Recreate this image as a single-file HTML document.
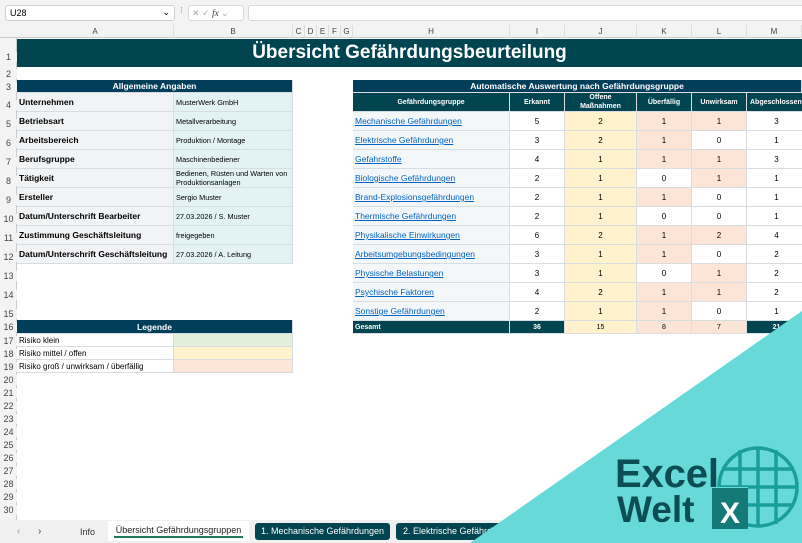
<!DOCTYPE html>
<html><head><meta charset="utf-8"><style>
*{margin:0;padding:0;box-sizing:border-box}
body{width:802px;height:543px;overflow:hidden;background:#fff;font-family:"Liberation Sans",sans-serif;position:relative}
.a{position:absolute}
.rh{position:absolute;left:0;width:17px;font-size:9px;color:#444;text-align:center;background:#f3f3f3}
.cell{position:absolute;font-size:8px;display:flex;align-items:center;border-right:1px solid #d8dde2;border-bottom:1px solid #d8dde2;overflow:hidden}
.lbl{font-weight:bold;font-size:8.5px;background:#f2f3f5;padding-left:2px}
.val{background:#e3f2f3;padding-left:2px;font-size:7.3px;line-height:9px}
.hdr{background:#003e5a;color:#fff;font-weight:bold;justify-content:center}
.th{background:#00454f;color:#fff;font-weight:bold;justify-content:center;font-size:7px;text-align:center;line-height:9px}
.lk{color:#0563c1;text-decoration:underline;background:#f3f7fa;padding-left:2px;font-size:8.5px}
.n{justify-content:center;font-size:8px;background:#fff}
.y{background:#fff2cc}.r{background:#fce4d6}
.ch{position:absolute;top:25px;height:13px;font-size:8px;color:#444;text-align:center;line-height:13px;border-right:1px solid #ddd}
</style></head><body>
<div class="a" style="left:0;top:0;width:802px;height:25px;background:#f3f3f3"></div>
<div class="a" style="left:5px;top:5px;width:170px;height:16px;background:#fff;border:1px solid #d0d0d0;border-radius:3px;font-size:9px;padding:2px 4px">U28<span style="position:absolute;right:4px;top:1px;font-size:9px">⌄</span></div>
<div class="a" style="left:180px;top:5px;font-size:9px;color:#888">⁝</div>
<div class="a" style="left:188px;top:5px;width:56px;height:16px;background:#fff;border:1px solid #d8d8d8;border-radius:3px;font-size:9px;color:#aaa;padding:2px 3px">✕ ✓ <i style="color:#333;font-family:'Liberation Serif',serif">fx</i> ⌄</div>
<div class="a" style="left:248px;top:5px;width:560px;height:16px;background:#fff;border:1px solid #d8d8d8;border-radius:3px"></div>
<div class="a" style="left:0;top:25px;width:802px;height:13px;background:#f3f3f3;border-bottom:1px solid #ccc"></div>
<div class="ch" style="left:17px;width:157px">A</div><div class="ch" style="left:174px;width:119px">B</div>
<div class="ch" style="left:293px;width:12px">C</div><div class="ch" style="left:305px;width:12px">D</div><div class="ch" style="left:317px;width:12px">E</div><div class="ch" style="left:329px;width:12px">F</div><div class="ch" style="left:341px;width:12px">G</div>
<div class="ch" style="left:353px;width:157px">H</div><div class="ch" style="left:510px;width:55px">I</div><div class="ch" style="left:565px;width:72px">J</div><div class="ch" style="left:637px;width:55px">K</div><div class="ch" style="left:692px;width:55px">L</div><div class="ch" style="left:747px;width:55px">M</div>
<div class="a" style="left:0;top:38px;width:17px;height:482px;background:#f3f3f3;border-right:1px solid #ccc"></div>
<div class="rh" style="top:52px">1</div><div class="rh" style="top:69px">2</div><div class="rh" style="top:82px">3</div>
<div class="rh" style="top:100px">4</div><div class="rh" style="top:119px">5</div><div class="rh" style="top:138px">6</div><div class="rh" style="top:157px">7</div><div class="rh" style="top:176px">8</div><div class="rh" style="top:195px">9</div><div class="rh" style="top:214px">10</div><div class="rh" style="top:233px">11</div><div class="rh" style="top:252px">12</div><div class="rh" style="top:271px">13</div><div class="rh" style="top:290px">14</div><div class="rh" style="top:309px">15</div><div class="rh" style="top:322px">16</div>
<div class="rh" style="top:336px">17</div><div class="rh" style="top:349px">18</div><div class="rh" style="top:362px">19</div><div class="rh" style="top:375px">20</div><div class="rh" style="top:388px">21</div><div class="rh" style="top:401px">22</div><div class="rh" style="top:414px">23</div><div class="rh" style="top:427px">24</div><div class="rh" style="top:440px">25</div><div class="rh" style="top:453px">26</div><div class="rh" style="top:466px">27</div><div class="rh" style="top:479px">28</div><div class="rh" style="top:492px">29</div><div class="rh" style="top:505px">30</div>
<div class="a" style="left:17px;top:39px;width:785px;height:28px;background:#00454f;color:#fff;font-weight:bold;font-size:19px;text-align:center;line-height:28px">Übersicht Gefährdungsbeurteilung</div>
<div class="cell hdr" style="left:17px;top:80px;width:276px;height:13px;font-size:8.5px">Allgemeine Angaben</div>
<div class="cell lbl" style="left:17px;top:93px;width:157px;height:19px">Unternehmen</div><div class="cell val" style="left:174px;top:93px;width:119px;height:19px">MusterWerk GmbH</div>
<div class="cell lbl" style="left:17px;top:112px;width:157px;height:19px">Betriebsart</div><div class="cell val" style="left:174px;top:112px;width:119px;height:19px">Metallverarbeitung</div>
<div class="cell lbl" style="left:17px;top:131px;width:157px;height:19px">Arbeitsbereich</div><div class="cell val" style="left:174px;top:131px;width:119px;height:19px">Produktion / Montage</div>
<div class="cell lbl" style="left:17px;top:150px;width:157px;height:19px">Berufsgruppe</div><div class="cell val" style="left:174px;top:150px;width:119px;height:19px">Maschinenbediener</div>
<div class="cell lbl" style="left:17px;top:169px;width:157px;height:19px">Tätigkeit</div><div class="cell val" style="left:174px;top:169px;width:119px;height:19px">Bedienen, Rüsten und Warten von Produktionsanlagen</div>
<div class="cell lbl" style="left:17px;top:188px;width:157px;height:19px">Ersteller</div><div class="cell val" style="left:174px;top:188px;width:119px;height:19px">Sergio Muster</div>
<div class="cell lbl" style="left:17px;top:207px;width:157px;height:19px">Datum/Unterschrift Bearbeiter</div><div class="cell val" style="left:174px;top:207px;width:119px;height:19px">27.03.2026 / S. Muster</div>
<div class="cell lbl" style="left:17px;top:226px;width:157px;height:19px">Zustimmung Geschäftsleitung</div><div class="cell val" style="left:174px;top:226px;width:119px;height:19px">freigegeben</div>
<div class="cell lbl" style="left:17px;top:245px;width:157px;height:19px">Datum/Unterschrift Geschäftsleitung</div><div class="cell val" style="left:174px;top:245px;width:119px;height:19px">27.03.2026 / A. Leitung</div>
<div class="cell hdr" style="left:17px;top:320px;width:276px;height:14px;font-size:8.5px">Legende</div>
<div class="cell" style="left:17px;top:334px;width:157px;height:13px;padding-left:2px">Risiko klein</div><div class="cell" style="left:174px;top:334px;width:119px;height:13px;background:#e2efda"></div>
<div class="cell" style="left:17px;top:347px;width:157px;height:13px;padding-left:2px">Risiko mittel / offen</div><div class="cell" style="left:174px;top:347px;width:119px;height:13px;background:#fff2cc"></div>
<div class="cell" style="left:17px;top:360px;width:157px;height:13px;padding-left:2px">Risiko groß / unwirksam / überfällig</div><div class="cell" style="left:174px;top:360px;width:119px;height:13px;background:#fce4d6"></div>
<div class="cell hdr" style="left:353px;top:80px;width:449px;height:13px;font-size:8.5px">Automatische Auswertung nach Gefährdungsgruppe</div>
<div class="cell th" style="left:353px;top:93px;width:157px;height:19px">Gefährdungsgruppe</div>
<div class="cell th" style="left:510px;top:93px;width:55px;height:19px">Erkannt</div>
<div class="cell th" style="left:565px;top:93px;width:72px;height:19px;align-items:flex-start">Offene<br>Maßnahmen</div>
<div class="cell th" style="left:637px;top:93px;width:55px;height:19px">Überfällig</div>
<div class="cell th" style="left:692px;top:93px;width:55px;height:19px">Unwirksam</div>
<div class="cell th" style="left:747px;top:93px;width:60px;height:19px;justify-content:flex-start;padding-left:3px">Abgeschlossen</div>
<div id="rows"></div>
<script>
var d=[["Mechanische Gefährdungen",5,2,1,1,3],["Elektrische Gefährdungen",3,2,1,0,1],["Gefahrstoffe",4,1,1,1,3],["Biologische Gefährdungen",2,1,0,1,1],["Brand-Explosionsgefährdungen",2,1,1,0,1],["Thermische Gefährdungen",2,1,0,0,1],["Physikalische Einwirkungen",6,2,1,2,4],["Arbeitsumgebungsbedingungen",3,1,1,0,2],["Physische Belastungen",3,1,0,1,2],["Psychische Faktoren",4,2,1,1,2],["Sonstige Gefährdungen",2,1,1,0,1]];
var h="";d.forEach(function(r,i){var t=112+i*19;
h+='<div class="cell lk" style="left:353px;top:'+t+'px;width:157px;height:19px">'+r[0]+'</div>';
h+='<div class="cell n" style="left:510px;top:'+t+'px;width:55px;height:19px">'+r[1]+'</div>';
h+='<div class="cell n y" style="left:565px;top:'+t+'px;width:72px;height:19px">'+r[2]+'</div>';
h+='<div class="cell n'+(r[3]?' r':'')+'" style="left:637px;top:'+t+'px;width:55px;height:19px">'+r[3]+'</div>';
h+='<div class="cell n'+(r[4]?' r':'')+'" style="left:692px;top:'+t+'px;width:55px;height:19px">'+r[4]+'</div>';
h+='<div class="cell n" style="left:747px;top:'+t+'px;width:60px;height:19px">'+r[5]+'</div>';});
document.getElementById("rows").innerHTML=h;
</script>
<div class="cell th" style="left:353px;top:321px;width:157px;height:13px;justify-content:flex-start;padding-left:2px">Gesamt</div>
<div class="cell th" style="left:510px;top:321px;width:55px;height:13px">36</div>
<div class="cell n y" style="left:565px;top:321px;width:72px;height:13px;font-size:7px">15</div>
<div class="cell n r" style="left:637px;top:321px;width:55px;height:13px;font-size:7px">8</div>
<div class="cell n r" style="left:692px;top:321px;width:55px;height:13px;font-size:7px">7</div>
<div class="cell th" style="left:747px;top:321px;width:60px;height:13px">21</div>
<div class="a" style="left:0;top:520px;width:802px;height:23px;background:#f0f0f0"></div>
<div class="a" style="left:17px;top:526px;font-size:10px;color:#999">‹</div><div class="a" style="left:38px;top:526px;font-size:10px;color:#444">›</div>
<div class="a" style="left:80px;top:527px;font-size:9px;color:#333">Info</div>
<div class="a" style="left:108px;top:521px;width:141px;height:20px;background:#fff;font-size:9px;color:#222;text-align:center;padding-top:4px">Übersicht Gefährdungsgruppen<div style="position:absolute;left:6px;right:6px;bottom:3px;height:2px;background:#1c7d5a"></div></div>
<div class="a" style="left:255px;top:523px;width:135px;height:17px;background:#00454f;border-radius:3px;color:#fff;font-size:9px;text-align:center;line-height:17px">1. Mechanische Gefährdungen</div>
<div class="a" style="left:396px;top:523px;width:120px;height:17px;background:#00454f;border-radius:3px;color:#fff;font-size:9px;line-height:17px;padding-left:7px;white-space:nowrap;overflow:hidden">2. Elektrische Gefährdungen</div>
<svg class="a" style="left:0;top:0" width="802" height="543">
<polygon points="470,543 802,311 802,543" fill="#66d9d8"/>
<g fill="none" stroke="#1a9e9a" stroke-width="3.5">
<circle cx="758" cy="487" r="39"/>
<line x1="740" y1="450" x2="740" y2="524"/><line x1="758" y1="448" x2="758" y2="526"/><line x1="776" y1="450" x2="776" y2="524"/>
<line x1="722" y1="469" x2="794" y2="469"/><line x1="719" y1="487" x2="797" y2="487"/><line x1="722" y1="505" x2="794" y2="505"/>
</g>
<rect x="710" y="487" width="38" height="43" fill="#66d9d8"/>
<rect x="712" y="488" width="36" height="41" fill="#137a78"/>
<text x="730" y="523" font-family="Liberation Sans" font-weight="bold" font-size="30" fill="#fff" text-anchor="middle">X</text>
<text x="615" y="487" font-family="Liberation Sans" font-weight="bold" font-size="40" fill="#0d4e55" textLength="104">Excel</text>
<text x="617" y="522" font-family="Liberation Sans" font-weight="bold" font-size="37" fill="#0d4e55">Welt</text>
</svg>
</body></html>
